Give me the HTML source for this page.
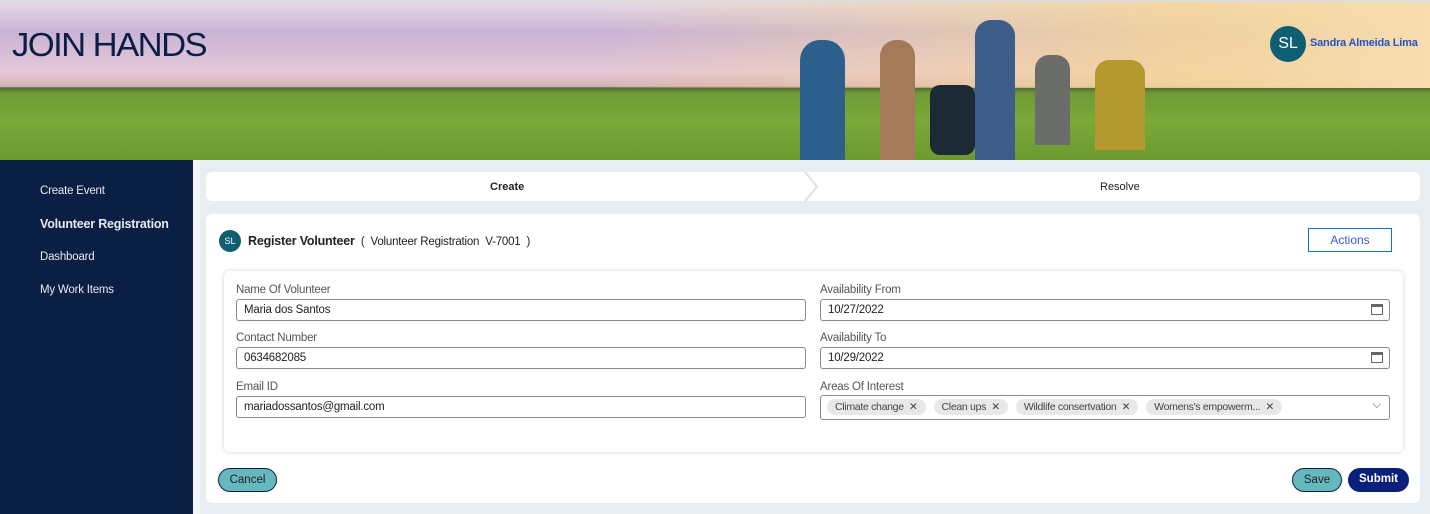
<!DOCTYPE html><html><head><style>
body{margin:0;width:1430px;height:514px;overflow:hidden;font-family:"Liberation Sans",sans-serif;font-size:12px;color:#222;background:#e8edf1;position:relative}
.a{position:absolute}
.ban{left:0;top:0;width:1430px;height:160px;background:linear-gradient(180deg,#e9dce6 0%,#c9b3d6 20%,#e6c7d6 45%,#d7b3b8 54%,#4f6a35 55%,#6f9a35 58%,#7aa83a 75%,#6c9a30 100%)}
.sky{left:600px;top:0;width:830px;height:88px;background:linear-gradient(90deg,rgba(0,0,0,0),rgba(246,214,150,.85) 70%,#f6dcae)}
.side{left:0;top:160px;width:193px;height:354px;background:#0b1f45}
.side div{position:absolute;left:40px;color:#e6e9ef;font-size:11.5px;letter-spacing:-0.2px}
.in{position:absolute;height:22px;border:1px solid #8a8a8a;border-radius:3px;background:#fff;box-sizing:border-box;padding:4px 7px;font-size:11.5px;letter-spacing:-0.2px}
.lb{position:absolute;color:#555;font-size:11.5px;letter-spacing:-0.2px}
.chip{display:inline-block;background:#e8e8e8;border-radius:10px;padding:2px 8px;margin-right:8px;color:#444;font-size:10.5px;letter-spacing:-0.3px}
.cal{position:absolute;right:6px;top:4px;width:12px;height:11px;border:1px solid #666;border-top-width:3px;box-sizing:border-box}
.btn{position:absolute;border-radius:12px;height:24px;box-sizing:border-box;text-align:center;line-height:22px;font-size:11.5px}
</style></head><body>
<div class="a ban"></div><div class="a sky"></div>
<div class="a" style="left:0;top:0;width:1430px;height:2px;background:#ddd"></div>
<div class="a" style="left:12px;top:26px;font-size:33px;color:#0b1f45;letter-spacing:-1.5px;transform:scaleX(1.05);transform-origin:left">JOIN HANDS</div>
<div class="a" style="left:800px;top:40px;width:45px;height:120px;background:#2d5f8c;border-radius:20px 20px 0 0"></div>
<div class="a" style="left:880px;top:40px;width:35px;height:120px;background:#a57a5a;border-radius:16px 16px 0 0"></div>
<div class="a" style="left:930px;top:85px;width:45px;height:70px;background:#1d2a35;border-radius:10px"></div>
<div class="a" style="left:975px;top:20px;width:40px;height:140px;background:#3b5d88;border-radius:16px 16px 0 0"></div>
<div class="a" style="left:1035px;top:55px;width:35px;height:90px;background:#6b6d6a;border-radius:14px 14px 0 0"></div>
<div class="a" style="left:1095px;top:60px;width:50px;height:90px;background:#b49a2e;border-radius:14px 14px 0 0"></div>
<div class="a" style="left:1270px;top:26px;width:36px;height:36px;border-radius:50%;background:#0f5e72;color:#fff;font-size:16px;text-align:center;line-height:36px">SL</div>
<div class="a" style="left:1310px;top:37px;color:#2653c9;font-weight:bold;font-size:11px;letter-spacing:-0.2px">Sandra Almeida Lima</div>
<div class="a side"><div style="top:25px">Create Event</div><div style="top:57px;font-weight:bold;font-size:12.5px">Volunteer Registration</div><div style="top:91px">Dashboard</div><div style="top:124px">My Work Items</div></div>
<div class="a" style="left:193px;top:160px;width:7px;height:354px;background:#f2f4f6"></div>
<div class="a" style="left:206px;top:172px;width:1214px;height:29px;background:#fff;border-radius:6px"></div>
<div class="a" style="left:490px;top:181px;font-weight:bold;font-size:11px">Create</div>
<div class="a" style="left:1100px;top:181px;font-size:11px">Resolve</div>
<svg class="a" style="left:804px;top:172px" width="16" height="29"><path d="M1 0 L13 14.5 L1 29" fill="none" stroke="#dde1e5" stroke-width="2"/></svg>
<div class="a" style="left:206px;top:214px;width:1214px;height:289px;background:#fff;border-radius:6px"></div>
<div class="a" style="left:219px;top:230px;width:22px;height:22px;border-radius:50%;background:#0f5e72;color:#fff;font-size:9px;text-align:center;line-height:22px">SL</div>
<div class="a" style="left:248px;top:234px;font-weight:bold;font-size:12.5px;letter-spacing:-0.2px">Register Volunteer <span style="font-weight:normal;font-size:11.5px">&nbsp;( &nbsp;Volunteer Registration &nbsp;V-7001 &nbsp;)</span></div>
<div class="a" style="left:1308px;top:228px;width:84px;height:24px;border:1px solid #1b6fc9;box-sizing:border-box;text-align:center;line-height:22px;color:#3a5bd0">Actions</div>
<div class="a" style="left:224px;top:271px;width:1179px;height:181px;background:#fff;border-radius:6px;box-shadow:0 0 4px rgba(0,0,0,.18)"></div>
<div class="lb" style="left:236px;top:284px">Name Of Volunteer</div><div class="in" style="left:236px;top:299px;width:570px">Maria dos Santos</div>
<div class="lb" style="left:236px;top:332px">Contact Number</div><div class="in" style="left:236px;top:347px;width:570px">0634682085</div>
<div class="lb" style="left:236px;top:381px">Email ID</div><div class="in" style="left:236px;top:396px;width:570px">mariadossantos@gmail.com</div>
<div class="lb" style="left:820px;top:284px">Availability From</div><div class="in" style="left:820px;top:299px;width:570px">10/27/2022<span class="cal"></span></div>
<div class="lb" style="left:820px;top:332px">Availability To</div><div class="in" style="left:820px;top:347px;width:570px">10/29/2022<span class="cal"></span></div>
<div class="lb" style="left:820px;top:381px">Areas Of Interest</div>
<div class="in" style="left:820px;top:395px;width:570px;height:25px;padding:3px 6px"><span class="chip">Climate change &nbsp;✕</span><span class="chip">Clean ups &nbsp;✕</span><span class="chip">Wildlife consertvation &nbsp;✕</span><span class="chip">Womens's empowerm... &nbsp;✕</span><span style="position:absolute;right:8px;top:3px;color:#666">⌵</span></div>
<div class="btn" style="left:218px;top:468px;width:59px;background:#66b8bf;border:1px solid #0b1f45">Cancel</div>
<div class="btn" style="left:1292px;top:468px;width:50px;background:#66b8bf;border:1px solid #0b1f45">Save</div>
<div class="btn" style="left:1348px;top:468px;width:61px;background:#0a1f7a;color:#fff;font-weight:bold">Submit</div>
</body></html>
